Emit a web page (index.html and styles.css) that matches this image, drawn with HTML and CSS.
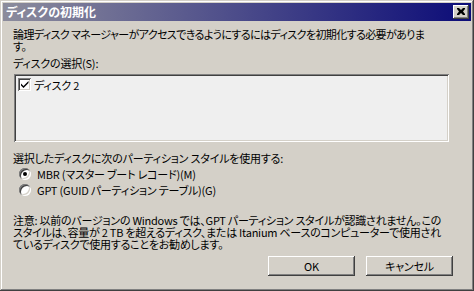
FILE: index.html
```html
<!DOCTYPE html>
<html lang="ja">
<head>
  <meta charset="UTF-8">
  <title>ディスクの初期化</title>
  <link rel="stylesheet" href="styles.css">
</head>
<body>
  <div class="window">
    <div class="titlebar">
      <span class="title">ディスクの初期化</span>
      <div class="close-btn">
        <svg width="8" height="7" viewBox="0 0 8 7"><path d="M0 0h2l2 2 2-2h2v1l-2 2.5 2 2.5v1h-2l-2-2-2 2h-2v-1l2-2.5-2-2.5z" fill="#000"/></svg>
      </div>
    </div>

    <div class="content">
      <p class="intro">論理ディスク マネージャーがアクセスできるようにするにはディスクを初期化する必要がありま<br>す。</p>

      <div class="label first">ディスクの選択(S):</div>
      <div class="listbox">
        <div class="list-item">
          <span class="check">
            <svg width="8" height="7" viewBox="0 0 8 7"><path d="M0 2.5l2.5 2.5 5-5v2l-5 5-2.5-2.5z" fill="#000"/></svg>
          </span>
          <span>ディスク 2</span>
        </div>
      </div>

      <div class="label second">選択したディスクに次のパーティション スタイルを使用する:</div>
      <div class="radio-row">
        <span class="radio checked"></span>
        <span>MBR (マスター ブート レコード)(M)</span>
      </div>
      <div class="radio-row">
        <span class="radio"></span>
        <span>GPT (GUID パーティション テーブル)(G)</span>
      </div>

      <p class="note">注意: 以前のバージョンの Windows では、GPT パーティション スタイルが認識されません。この<br>スタイルは、容量が 2 TB を超えるディスク、または Itanium ベースのコンピューターで使用され<br>ているディスクで使用することをお勧めします。</p>

      <div class="buttons">
        <div class="btn">OK</div>
        <div class="btn">キャンセル</div>
      </div>
    </div>
  </div>
</body>
</html>
```

FILE: styles.css
```css
body {
  margin: 0;
  background: #d4d0c8;
  font-family: "Noto Sans CJK JP", "Liberation Sans", sans-serif;
}

.window {
  width: 474px;
  height: 291px;
  box-sizing: border-box;
  padding: 3px;
  background: #d4d0c8;
  box-shadow: inset -1px -1px #404040, inset 1px 1px #d4d0c8, inset -2px -2px #808080, inset 2px 2px #fff;
  display: flex;
  flex-direction: column;
}

.titlebar {
  height: 18px;
  display: flex;
  align-items: center;
  justify-content: space-between;
  padding: 0 2px 0 3px;
  background: linear-gradient(to right, #8c8c9c, #0c0c78);
}
.title {
  color: #fff;
  font-weight: bold;
  font-size: 12px;
  line-height: 12px;
  font-feature-settings: "palt";
}
.close-btn {
  width: 16px;
  height: 14px;
  box-sizing: border-box;
  background: #d4d0c8;
  box-shadow: inset -1px -1px #404040, inset 1px 1px #fff, inset -2px -2px #808080;
  display: flex;
  align-items: center;
  justify-content: center;
  padding-bottom: 1px;
}

.content {
  flex: 1;
  padding: 7px 18px 0 10px;
  font-size: 11px;
  letter-spacing: -0.2px;
  line-height: 12px;
  color: #000;
  font-feature-settings: "palt";
  white-space: nowrap;
}
.intro {
  margin: 0;
  letter-spacing: -0.6px;
}
.label.first {
  margin-top: 5px;
}
.label.second {
  margin-top: 10px;
}

.listbox {
  margin: 5px 4px 0 1px;
  height: 68px;
  box-sizing: border-box;
  padding: 4px 2px;
  background: #efefef;
  box-shadow: inset 1px 1px #808080, inset -1px -1px #fff, inset 2px 2px #404040, inset -2px -2px #d4d0c8;
}
.list-item {
  display: flex;
  align-items: center;
  gap: 3px;
  padding-left: 2px;
  height: 13px;
}
.check {
  width: 13px;
  height: 13px;
  box-sizing: border-box;
  background: #fff;
  box-shadow: inset 1px 1px #808080, inset -1px -1px #fff, inset 2px 2px #404040, inset -2px -2px #d4d0c8;
  display: flex;
  align-items: center;
  justify-content: center;
}

.radio-row {
  display: flex;
  align-items: center;
  gap: 6px;
  height: 12px;
  margin-top: 4px;
  padding-left: 6px;
}
.radio {
  width: 12px;
  height: 12px;
  border-radius: 50%;
  background: #fff;
  box-shadow: inset 1px 1px #808080, inset -1px -1px #fff, inset 2px 2px #404040, inset -2px -2px #d4d0c8;
  display: flex;
  align-items: center;
  justify-content: center;
}
.radio.checked::after {
  content: "";
  width: 4px;
  height: 4px;
  border-radius: 50%;
  background: #000;
}

.note {
  margin: 18px 0 0;
  letter-spacing: -0.25px;
}

.buttons {
  display: flex;
  justify-content: flex-end;
  gap: 11px;
  margin-top: 6px;
}
.btn {
  width: 87px;
  height: 20px;
  box-sizing: border-box;
  background: #d4d0c8;
  box-shadow: inset -1px -1px #404040, inset 1px 1px #fff, inset -2px -2px #808080;
  display: flex;
  align-items: center;
  justify-content: center;
}
```
